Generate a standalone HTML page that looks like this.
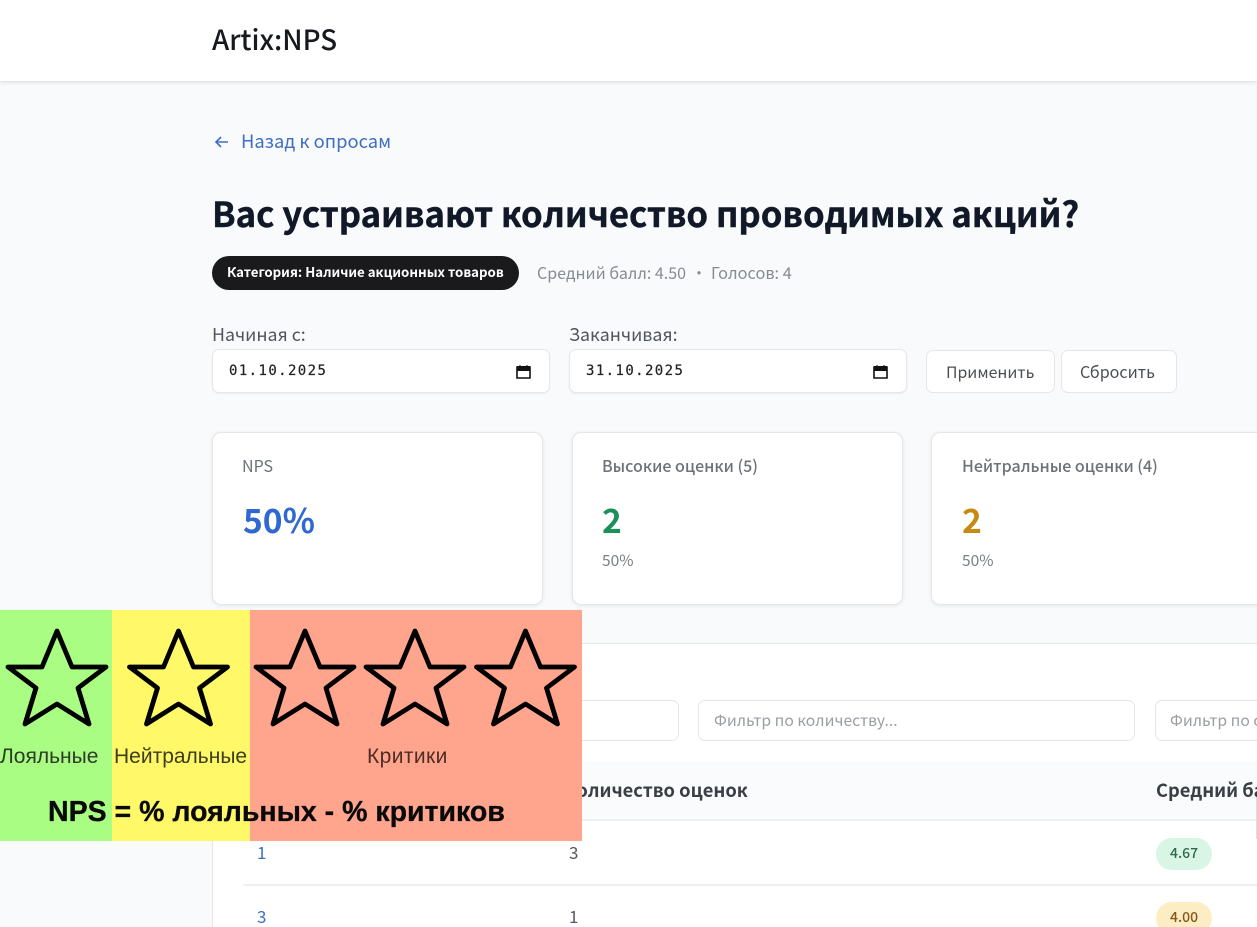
<!DOCTYPE html>
<html lang="ru"><head><meta charset="utf-8"><title>Artix:NPS</title>
<style>
*{box-sizing:border-box}
html,body{margin:0;padding:0;width:1257px;height:927px;overflow:hidden}
body{background:#f9fafc;font-family:"Noto Sans CJK SC","Liberation Sans",sans-serif;color:#212529}
#w{position:absolute;left:0;top:0;width:1257px;height:927px;overflow:hidden;background:#f9fafc;filter:blur(.35px)}
.a{position:absolute;white-space:nowrap;line-height:1}
.box{position:absolute;background:#fff;border:1px solid #e4e6ea}
.mono{font-family:"DejaVu Sans Mono","Liberation Mono",monospace;font-size:14px;letter-spacing:1.4px;color:#222;-webkit-text-stroke:.2px #222}
.r{font-family:"Liberation Sans",sans-serif}
</style></head><body><div id="w">
<div style="position:absolute;left:0;top:0;width:1257px;height:81px;background:#fff;box-shadow:0 1px 4px rgba(0,0,0,.14)"></div>
<div class="a" style="left:212px;top:25px;font-size:27.7px;color:#16191d;font-weight:500">Artix:NPS</div>

<svg style="position:absolute;left:214px;top:135px" width="16" height="14" viewBox="0 0 16 14"><path d="M14 7H2M7 2 2 7l5 5" fill="none" stroke="#3d6fc4" stroke-width="1.6"/></svg>
<div class="a" style="left:241px;top:132px;font-size:18.35px;color:#3e6fc0">Назад к опросам</div>
<div class="a" style="left:212px;top:195px;font-size:34.7px;font-weight:700;color:#111827;-webkit-text-stroke:.4px #111827">Вас устраивают количество проводимых акций?</div>

<div style="position:absolute;left:212px;top:256px;width:307px;height:34px;border-radius:17px;background:#1a1a1c"></div>
<div class="a" style="left:227px;top:265px;font-size:13.25px;font-weight:700;color:#fff">Категория: Наличие акционных товаров</div>
<div class="a" style="left:537px;top:264px;font-size:16px;color:#868b92">Средний балл: 4.50</div>
<div class="a" style="left:691px;top:264px;font-size:16px;color:#868b92">•</div>
<div class="a" style="left:711px;top:264px;font-size:16.300px;color:#868b92">Голосов: 4</div>

<div class="a" style="left:212px;top:326px;font-size:17.8px;color:#50555b">Начиная с:</div>
<div class="a" style="left:569px;top:326px;font-size:17.8px;color:#50555b">Заканчивая:</div>
<div class="box" style="left:212px;top:349px;width:338px;height:44px;border-radius:7px;box-shadow:0 1px 2px rgba(0,0,0,.05)"></div>
<div class="box" style="left:569px;top:349px;width:338px;height:44px;border-radius:7px;box-shadow:0 1px 2px rgba(0,0,0,.05)"></div>
<div class="a mono" style="left:229px;top:364px">01.10.2025</div>
<div class="a mono" style="left:586px;top:364px">31.10.2025</div>
<svg style="position:absolute;left:516px;top:364px" width="15" height="15" viewBox="0 0 15 15"><path d="M1 3.500h13v10.500H1z" fill="none" stroke="#111" stroke-width="1.600"/><path d="M1 2.500h13v4H1zM4 1v2M11 1v2" fill="#111" stroke="#111"/></svg>
<svg style="position:absolute;left:873px;top:364px" width="15" height="15" viewBox="0 0 15 15"><path d="M1 3.500h13v10.500H1z" fill="none" stroke="#111" stroke-width="1.600"/><path d="M1 2.500h13v4H1zM4 1v2M11 1v2" fill="#111" stroke="#111"/></svg>
<div class="box" style="left:926px;top:350px;width:129px;height:43px;border-radius:7px"></div>
<div class="box" style="left:1061px;top:350px;width:116px;height:43px;border-radius:7px"></div>
<div class="a" style="left:946px;top:364px;font-size:15.9px;color:#4a4e54">Применить</div>
<div class="a" style="left:1080px;top:363px;font-size:16.100px;color:#4a4e54">Сбросить</div>

<div class="box" style="left:212px;top:432px;width:331px;height:173px;border-radius:9px;box-shadow:0 1px 4px rgba(0,0,0,.08)"></div>
<div class="box" style="left:572px;top:432px;width:331px;height:173px;border-radius:9px;box-shadow:0 1px 4px rgba(0,0,0,.08)"></div>
<div class="box" style="left:931px;top:432px;width:340px;height:173px;border-radius:9px;box-shadow:0 1px 4px rgba(0,0,0,.08)"></div>
<div class="a" style="left:242px;top:457px;font-size:16px;color:#6c7278">NPS</div>
<div class="a" style="left:602px;top:457px;font-size:16px;color:#6c7278;font-weight:500">Высокие оценки (5)</div>
<div class="a" style="left:962px;top:457px;font-size:16px;color:#6c7278;font-weight:500">Нейтральные оценки (4)</div>
<div class="a" style="left:243px;top:502px;font-size:33.6px;font-weight:700;color:#2f68d0">50%</div>
<div class="a" style="left:602px;top:502px;font-size:33.6px;font-weight:700;color:#1d8f5a">2</div>
<div class="a" style="left:962px;top:502px;font-size:33.6px;font-weight:700;color:#c68a12">2</div>
<div class="a" style="left:602px;top:553px;font-size:15.500px;color:#7a7f85">50%</div>
<div class="a" style="left:962px;top:553px;font-size:15.500px;color:#7a7f85">50%</div>

<div class="box" style="left:212px;top:643px;width:1060px;height:300px;border-radius:9px"></div>
<div class="box" style="left:500px;top:700px;width:179px;height:41px;border-radius:7px"></div>
<div class="box" style="left:698px;top:700px;width:437px;height:41px;border-radius:7px"></div>
<div class="box" style="left:1155px;top:700px;width:120px;height:41px;border-radius:7px"></div>
<div class="a" style="left:714px;top:712px;font-size:15.700px;color:#9a9ea4">Фильтр по количеству...</div>
<div class="a" style="left:1170px;top:712px;font-size:15.700px;color:#9a9ea4">Фильтр по оценке</div>
<div style="position:absolute;left:243px;top:761px;width:1014px;height:60px;background:#fafbfc;border-bottom:2px solid #eef0f2"></div>
<div class="a" style="left:564px;top:781px;font-size:18.300px;font-weight:700;color:#3a3f45">Количество оценок</div>
<div class="a" style="left:1156px;top:781px;font-size:18.300px;font-weight:700;color:#3a3f45">Средний балл</div>
<div style="position:absolute;left:243px;top:884px;width:1014px;height:2px;background:#eef0f2"></div>
<div class="a" style="left:257px;top:843px;font-size:17px;color:#3e6fc0">1</div>
<div class="a" style="left:257px;top:907px;font-size:17px;color:#3e6fc0">3</div>
<div class="a" style="left:569px;top:843px;font-size:17px;color:#55595f">3</div>
<div class="a" style="left:569px;top:907px;font-size:17px;color:#55595f">1</div>
<div style="position:absolute;left:1156px;top:838px;width:56px;height:32px;border-radius:16px;background:#d9f5e5"></div>
<div style="position:absolute;left:1156px;top:902px;width:56px;height:32px;border-radius:16px;background:#fdedc2"></div>
<div class="a" style="left:1170px;top:846px;font-size:14px;font-weight:500;color:#2d6a4a">4.67</div>
<div class="a" style="left:1170px;top:910px;font-size:14px;font-weight:500;color:#85561c">4.00</div>
<div style="position:absolute;left:1256px;top:797px;width:1px;height:42px;background:#dcdee0"></div>

<div style="position:absolute;left:0;top:610px;width:112px;height:231px;background:#a8fd82"></div>
<div style="position:absolute;left:112px;top:610px;width:138px;height:231px;background:#fff869"></div>
<div style="position:absolute;left:250px;top:610px;width:332px;height:231px;background:#ffa48d"></div>
<svg style="position:absolute;left:0;top:610px" width="582" height="130" viewBox="0 0 582 130">
<g fill="none" stroke="#000" stroke-width="4.800" stroke-linejoin="round">
<path d="M57 21 72 57H106L78 78 89 114 57 94 25 114 36 78 8 57H42Z"/>
<path d="M178.500 21 193.500 57H227.500L199.500 78 210.500 114 178.500 94 146.500 114 157.500 78 129.500 57H163.500Z"/>
<path d="M305 21 320 57H354L326 78 337 114 305 94 273 114 284 78 256 57H290Z"/>
<path d="M415 21 430 57H464L436 78 447 114 415 94 383 114 394 78 366 57H400Z"/>
<path d="M525.500 21 540.500 57H574.500L546.500 78 557.500 114 525.500 94 493.500 114 504.500 78 476.500 57H510.500Z"/>
</g></svg>
<div class="a r" style="left:0;top:746px;font-size:21px;color:#2f3a2a">Лояльные</div>
<div class="a r" style="left:114px;top:746px;font-size:21px;color:#3e3d1c">Нейтральные</div>
<div class="a r" style="left:367px;top:746px;font-size:21px;color:#4f2d25;letter-spacing:.4px">Критики</div>
<div class="a r" style="left:48px;top:798px;font-size:28.500px;font-weight:700;color:#0a0a0a;-webkit-text-stroke:.3px #0a0a0a">NPS = % лояльных - % критиков</div>
</div></body></html>
